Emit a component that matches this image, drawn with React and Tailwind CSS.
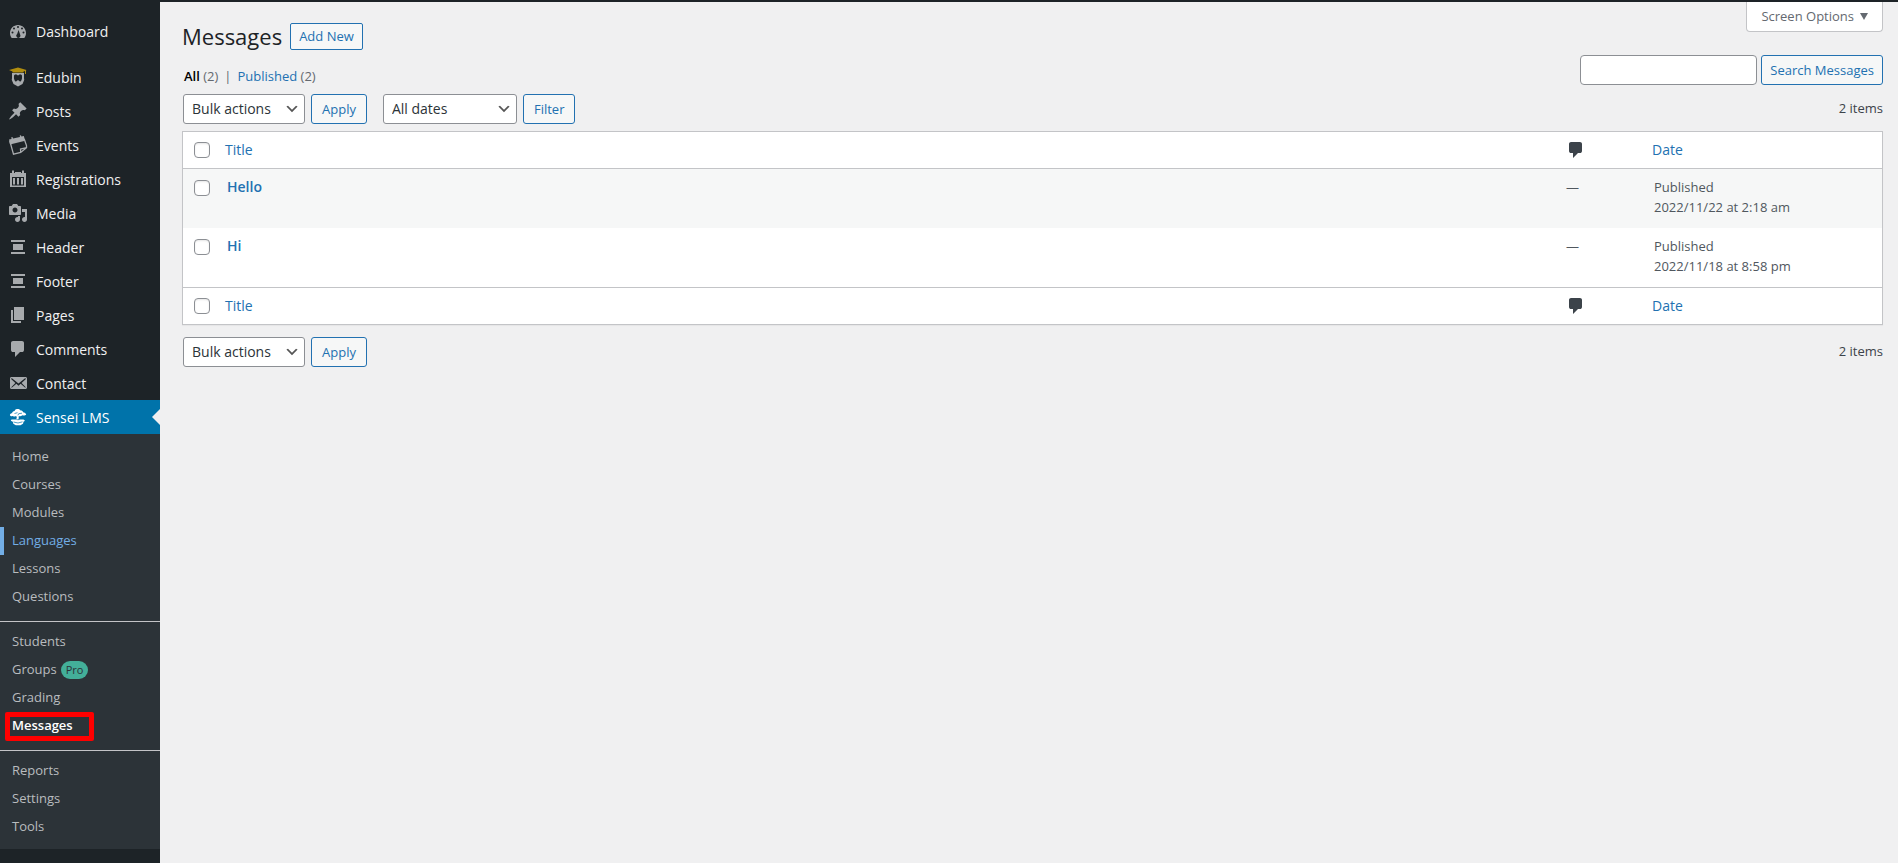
import { Fragment } from 'react';

const Icon = ({ children, className = 'text-[#a7aaad]' }) => (
  <svg viewBox="0 0 20 20" width="20" height="20" fill="currentColor" aria-hidden="true" className={`shrink-0 ${className}`}>
    {children}
  </svg>
);

const CommentPath = () => <path d="M5 2h9q.82 0 1.410.59T16 4v7q0 .82-.59 1.410T14 13h-2l-5 5v-5H5q-.82 0-1.410-.59T3 11V4q0-.82.59-1.410T5 2z" />;
const Template = () => <path d="M3 3h14v2H3zM5 7h10v6H5zM3 15h14v2H3z" />;

const menu = [
  { label: 'Edubin', icon: (
    <>
      <path fill="#b08d0f" d="M10 0.500L1 3l3.500 1.500v1h11v-1l1.500-.5v3h1V3.500l.5-.5z" />
      <path fillRule="evenodd" d="M4 6h12v5c0 1 .5 1.500 0 2.500L14.500 17 10 19.500 5.500 17 4 13.500c-.5-1 0-1.500 0-2.500zM6.200 8c-.5 2-.4 5 1.300 6.500L10 16l2.500-1.500C14.200 13 14.300 10 13.800 8L12 7.200 10 8.500 8 7.200z" />
      <path d="M7.500 15l2.500-2 2.500 2-2.500 2z" />
    </>
  ) },
  { label: 'Posts', icon: <path d="M10.440 3.020l1.820-1.820 6.360 6.350-1.830 1.820c-1.050-.68-2.480-.57-3.410.36l-.75.75c-.92.93-1.040 2.350-.35 3.410l-1.830 1.820-2.410-2.410-2.800 2.790c-.42.42-3.380 2.710-3.800 2.290s1.860-3.390 2.280-3.810l2.790-2.790L4.100 9.360l1.830-1.820c1.050.69 2.480.57 3.400-.36l.75-.75c.93-.92 1.050-2.350.36-3.410z" /> },
  { label: 'Events', icon: (
    <>
      <path d="M1 4.500L3.500 4 3.300 2.200l1.200-.3.5 1.700L12 2l-.3-1.500L13 .2l.4 1.400L15.800 1l1.400 4.700L2 9.500z" />
      <path fill="none" stroke="currentColor" strokeWidth="1.300" d="M1.800 6l3.700 13.200 7.200-1.700 5.800-4.800V10.500L16.200 4M12.700 17.500l-.2-3.500 6-1.300" />
    </>
  ) },
  { label: 'Registrations', icon: <path fillRule="evenodd" d="M4 1.500h2V4h1V3h6v1h1V1.500h2V4h2v14H2V4h2zM4 8v8.500h12V8zM5 9h2v6.500H5zm4 0h2v6.500H9zm4 0h2v6.500h-2z" /> },
  { label: 'Media', icon: <path fillRule="evenodd" d="M13 11V4c0-.55-.45-1-1-1h-1.670L9 1H5L3.670 3H2c-.55 0-1 .45-1 1v7c0 .55.45 1 1 1h10c.55 0 1-.45 1-1zM7 4.500c1.380 0 2.500 1.120 2.500 2.500S8.380 9.500 7 9.500 4.500 8.380 4.500 7 5.620 4.500 7 4.500zM14 6h5v10.500c0 1.380-1.120 2.500-2.500 2.500S14 17.880 14 16.500s1.120-2.500 2.500-2.500c.17 0 .34.020.5.050V9h-3V6zm-4 8.050V13h2v3.500c0 1.380-1.120 2.500-2.500 2.500S7 17.880 7 16.500 8.120 14 9.500 14c.17 0 .34.020.5.050z" /> },
  { label: 'Header', icon: <Template /> },
  { label: 'Footer', icon: <Template /> },
  { label: 'Pages', icon: <path d="M6 15V2h10v13H6zm-1 1h8v2H3V5h2v11z" /> },
  { label: 'Comments', icon: <CommentPath /> },
  { label: 'Contact', icon: <path d="M19 14.500v-9c0-.83-.67-1.500-1.500-1.500H3.490c-.83 0-1.500.67-1.500 1.500v9c0 .83.67 1.500 1.500 1.500H17.500c.83 0 1.500-.67 1.500-1.500zm-1.310-9.110c.33.33.15.67-.03.840L13.600 9.950l3.900 4.060c.12.140.2.360.060.510-.13.160-.43.150-.560.050l-4.370-3.730-2.140 1.950-2.130-1.950-4.370 3.730c-.13.1-.43.110-.560-.05-.14-.15-.06-.37.060-.51l3.900-4.060-4.060-3.720c-.18-.17-.36-.51-.03-.84s.67-.17.950.070l6.240 5.040 6.250-5.040c.28-.24.620-.4.950-.07z" /> },
];

const submenu = [
  ['Home', 'Courses', 'Modules', 'Languages', 'Lessons', 'Questions'],
  ['Students', 'Groups', 'Grading', 'Messages'],
  ['Reports', 'Settings', 'Tools'],
];

const rows = [
  { title: 'Hello', date: '2022/11/22 at 2:18 am', tint: 'bg-[#f6f7f7]' },
  { title: 'Hi', date: '2022/11/18 at 8:58 pm', tint: 'bg-white' },
];

const box = 'block size-4 appearance-none rounded border border-[#8c8f94] bg-white shadow-[inset_0_1px_2px_rgba(0,0,0,0.1)]';
const button = 'h-[30px] rounded-[3px] border border-[#2271b1] bg-[#f6f7f7] text-[13px] leading-7 text-[#2271b1]';

function MenuLink({ label, icon }) {
  return (
    <li>
      <a href="#" className="flex h-[34px] items-center gap-2 pl-2 text-[14px] text-[#f0f0f1]">
        <Icon>{icon}</Icon>
        {label}
      </a>
    </li>
  );
}

function SubLink({ label }) {
  let look = 'text-[#b9bcbf]';
  if (label === 'Languages') look = 'text-[#72aee6] shadow-[inset_4px_0_0_0_#72aee6]';
  if (label === 'Messages') look = 'font-semibold text-white';
  return (
    <li className="relative">
      <a href="#" className={`flex h-7 items-center gap-1 px-3 text-[13px] ${look}`}>
        {label}
        {label === 'Groups' && (
          <span className="flex h-[18px] items-center rounded-full bg-[#43af99] px-[5px] text-[11px] text-[#2c3338]">Pro</span>
        )}
      </a>
      {label === 'Messages' && <span className="absolute top-0 left-[5px] h-[29px] w-[89px] rounded-[2px] border-5 border-[#ff0000]" />}
    </li>
  );
}

function Sidebar() {
  return (
    <nav aria-label="Main menu" className="w-40 shrink-0 bg-[#1d2327] pt-3.5">
      <ul>
        <MenuLink
          label="Dashboard"
          icon={<path fillRule="evenodd" d="M3.760 17h12.480c1.100-1.370 1.760-3.110 1.760-5 0-4.420-3.580-8-8-8s-8 3.580-8 8c0 1.890.66 3.630 1.760 5zM10 5a1 1 0 110 2 1 1 0 010-2zM6 6.500a1 1 0 110 2 1 1 0 010-2zM14 6.500a1 1 0 110 2 1 1 0 010-2zM10.600 9l1.500 4.500a2.100 2.100 0 11-3-.5zM4.500 10.500a1 1 0 110 2 1 1 0 010-2zM15.500 10.500a1 1 0 110 2 1 1 0 010-2z" />}
        />
      </ul>
      <ul className="mt-3">
        {menu.map((item) => <MenuLink key={item.label} {...item} />)}
        <li className="relative">
          <a href="#" className="flex h-[34px] items-center gap-2 bg-[#0073aa] pl-2 text-[14px] text-white">
            <Icon className="text-white">
              <path d="M8.500 2.200c1.500-.5 3.500 0 4 1.300 1.500 0 2.500.7 2.500 1.700 1.500 0 3 1 3.200 2.300-.7.900-2.500 1.200-3.900.7-.8.900-2.300 1.200-3.500.7L10.600 12.500H8.300l.5-2.500-.8-1c-1 .6-2.800.8-3.500.1-1.200.2-2.500-.3-2.600-1.200.1-1 1.100-1.700 2.200-1.700-.1-1.200 1-2.300 2.500-2.300.3-1 1-1.700 1.900-2z" />
              <path fill="none" stroke="#0073aa" strokeWidth=".7" d="M6.500 6.500l3-.8M9.900 8.300l.8-1.600 3.300-.5" />
              <path d="M3.500 12.500H8l2 .8 2-.8h3.500l1.500 1.200-1.500 1-.5 2-2.500 1.500H7.800L5.300 16.800l-.5-2-2-1z" />
              <path fill="none" stroke="#0073aa" strokeWidth=".7" d="M5.500 15l4.500 1 4.500-1.200" />
            </Icon>
            Sensei LMS
          </a>
          <span className="absolute top-[9px] right-0 border-y-8 border-r-8 border-y-transparent border-r-[#f0f0f1]" />
        </li>
      </ul>
      <div className="bg-[#2c3338] pt-[9px] pb-2">
        {submenu.map((group, i) => (
          <Fragment key={group[0]}>
            {i > 0 && <hr className="mt-2.5 mb-1.5 border-[#c3c4c7]" />}
            <ul>{group.map((label) => <SubLink key={label} label={label} />)}</ul>
          </Fragment>
        ))}
      </div>
    </nav>
  );
}

function Select({ label, value, width }) {
  return (
    <div className={`relative ${width}`}>
      <select aria-label={label} className="block h-[30px] w-full appearance-none rounded-[3px] border border-[#8c8f94] bg-white pr-5 pl-2 text-[14px] leading-7 text-[#2c3338]">
        <option>{value}</option>
      </select>
      <svg viewBox="0 0 20 20" className="pointer-events-none absolute top-[7px] right-[5px] size-4" aria-hidden="true">
        <path d="M5 6l5 5 5-5 2 1-7 7-7-7 2-1z" fill="#555" />
      </svg>
    </div>
  );
}

function HeadRow({ id, edge }) {
  const cell = `h-[37px] text-left align-middle font-normal ${edge}`;
  return (
    <tr className="bg-white">
      <td className={`pl-[11px] ${cell}`}><input type="checkbox" aria-label={`Select all, ${id}`} className={box} /></td>
      <th scope="col" className={cell}><a href="#" className="block text-[14px] leading-5 text-[#2271b1]">Title</a></th>
      <th scope="col" className={cell}>
        <a href="#" aria-label="Comments" className="block"><Icon className="text-[#3c434a]"><CommentPath /></Icon></a>
      </th>
      <th scope="col" className={cell}><a href="#" className="block text-[14px] leading-5 text-[#2271b1]">Date</a></th>
    </tr>
  );
}

export default function App() {
  return (
    <div className="flex min-h-screen bg-[#f0f0f1] font-['Open_Sans','Noto_Sans',sans-serif] text-[13px] text-[#3c434a]">
      <Sidebar />
      <main className="min-w-0 flex-1 border-t-2 border-[#1d2327] pr-[15px] pl-[22px]">
        <div className="flex items-start justify-between">
          <div className="flex items-center gap-2 pt-[21px]">
            <h1 className="text-[22px] leading-[27px] text-[#1d2327]">Messages</h1>
            <a href="#" className="flex h-[27px] items-center rounded-[2px] border border-[#2271b1] bg-[#f6f7f7] px-2 font-medium text-[#2271b1]">Add New</a>
          </div>
          <button className="flex h-[30px] items-center gap-1.5 rounded-b border border-t-0 border-[#c3c4c7] bg-white px-3.5 text-[13px] text-[#646970]">
            Screen Options
            <svg viewBox="0 0 8 7" width="8" height="7" fill="currentColor" aria-hidden="true"><path d="M0 0h8L4 7z" /></svg>
          </button>
        </div>
        <div className="flex items-start justify-between">
          <p className="flex gap-1.5 pt-4 pl-0.5 leading-5 text-[#646970]">
            <span><a href="#" className="font-semibold text-black">All</a> (2)</span>
            <span>|</span>
            <span><a href="#" className="text-[#2271b1]">Published</a> (2)</span>
          </p>
          <form className="flex gap-1 pt-[5px]">
            <input type="search" aria-label="Search Messages" className="h-[30px] w-[177px] rounded border border-[#8c8f94] bg-white px-2" />
            <button type="button" className={`px-2 ${button}`}>Search Messages</button>
          </form>
        </div>
        <div className="mt-2 flex items-center gap-1.5 pl-px">
          <Select label="Bulk actions" value="Bulk actions" width="w-[122px]" />
          <button className={`px-2.5 ${button}`}>Apply</button>
          <div className="ml-2.5"><Select label="Filter by date" value="All dates" width="w-[134px]" /></div>
          <button className={`px-2.5 ${button}`}>Filter</button>
          <span className="ml-auto">2 items</span>
        </div>
        <div className="mt-[7px] border border-[#c3c4c7] bg-white shadow-[0_1px_1px_rgba(0,0,0,0.04)]">
          <table className="w-full table-fixed border-separate border-spacing-0">
            <colgroup><col className="w-[42px]" /><col /><col className="w-[86px]" /><col className="w-[230px]" /></colgroup>
            <thead><HeadRow id="top" edge="border-b border-[#c3c4c7]" /></thead>
            <tbody>
              {rows.map((row) => (
                <tr key={row.title} className={`h-[59px] align-top ${row.tint}`}>
                  <td className="pt-[11px] pl-[11px]"><input type="checkbox" aria-label={`Select ${row.title}`} className={box} /></td>
                  <td className="pt-2 pl-0.5"><a href="#" className="block text-[14px] leading-5 font-semibold text-[#2271b1]">{row.title}</a></td>
                  <td className="pt-2 leading-5 text-[#50575e]">—</td>
                  <td className="pt-2 pl-0.5 leading-5 text-[#50575e]">Published<br />{row.date}</td>
                </tr>
              ))}
            </tbody>
            <tfoot><HeadRow id="bottom" edge="border-t border-[#c3c4c7]" /></tfoot>
          </table>
        </div>
        <div className="mt-3 flex items-center gap-1.5 pl-px">
          <Select label="Bulk actions, bottom" value="Bulk actions" width="w-[122px]" />
          <button className={`px-2.5 ${button}`}>Apply</button>
          <span className="ml-auto">2 items</span>
        </div>
      </main>
    </div>
  );
}
